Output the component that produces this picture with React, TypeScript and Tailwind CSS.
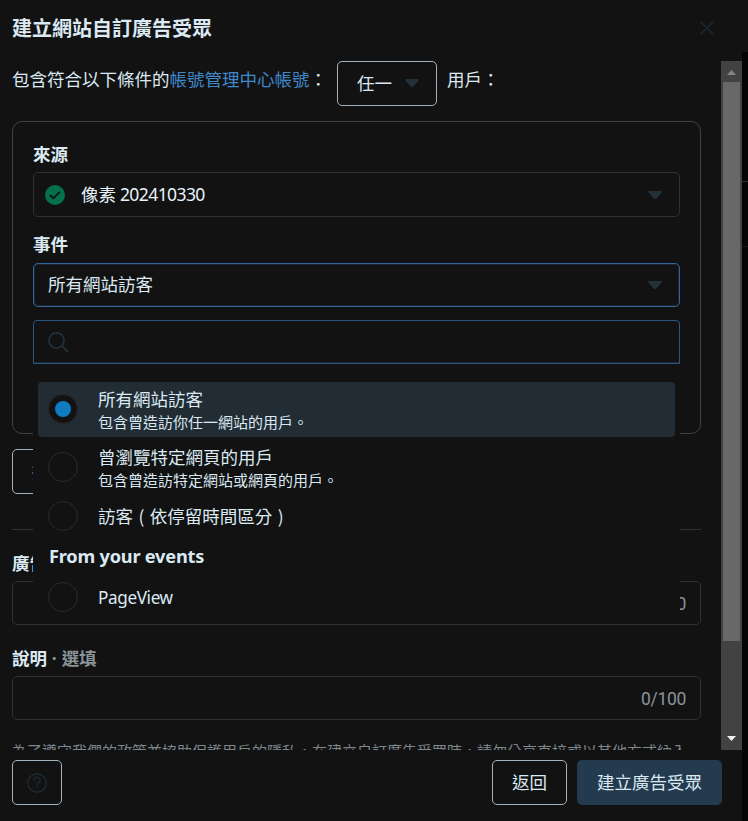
import type { ReactNode } from 'react';
import clsx from 'clsx';

interface EventOption {
  title: string;
  description?: string;
  selected?: boolean;
}

const options: EventOption[] = [
  {
    title: '所有網站訪客',
    description: '包含曾造訪你任一網站的用戶。',
    selected: true,
  },
  {
    title: '曾瀏覽特定網頁的用戶',
    description: '包含曾造訪特定網站或網頁的用戶。',
  },
  { title: '訪客 ( 依停留時間區分 )' },
];

function Caret() {
  return (
    <svg className="h-2 w-3.5 shrink-0" viewBox="0 0 14 8" fill="#22303a">
      <path d="M1.2 0h11.6c1 0 1.4 1.1.7 1.8L8.6 7.2a2.2 2.2 0 0 1-3.2 0L.5 1.8C-.2 1.1.2 0 1.2 0Z" />
    </svg>
  );
}

function Radio({ checked }: { checked?: boolean }) {
  return (
    <span
      className={clsx(
        'flex size-[30px] shrink-0 items-center justify-center rounded-full border bg-[#121212]',
        checked ? 'border-[#272727]' : 'border-[#2c2c2c]',
      )}
    >
      {checked && <span className="size-4 rounded-full bg-[#0f7cc2]" />}
    </span>
  );
}

function SectionLabel({ children }: { children: ReactNode }) {
  return (
    <div className="h-6 text-[17.5px] leading-6 font-bold">{children}</div>
  );
}

function TextInput({ counter }: { counter: string }) {
  return (
    <div className="flex h-11 items-center justify-end rounded-[5px] border border-[#2f3030] pt-[3px] pr-[14px] font-['Roboto',sans-serif] text-[17.5px] tracking-[-0.3px] text-[#8a949b]">
      {counter}
    </div>
  );
}

function EventMenu() {
  return (
    <div className="absolute top-[198px] left-5 h-[303px] w-[647px] bg-[#121212]">
      {/* 搜尋 */}
      <div className="flex h-11 items-center rounded-t-[4px] border border-[#2a5680] pl-3.5 shadow-[inset_0_-1px_0_0_#1b2b3b]">
        <svg
          className="size-[21px]"
          viewBox="0 0 21 21"
          fill="none"
          stroke="#22303a"
          strokeWidth="1.7"
        >
          <circle cx="8.5" cy="8.5" r="7.6" />
          <path d="m14 14 6 6" strokeWidth="2" />
        </svg>
      </div>
      {/* 選項 */}
      <div className="mt-[18px] flex flex-col px-[5px]">
        {options.map((option) => (
          <div
            key={option.title}
            className={clsx(
              'flex items-center gap-5 rounded-[4px] pl-2.5',
              option.selected && 'bg-[#222c34]',
              option.description ? 'h-[55px] pb-px' : 'mt-0.5 h-[37px]',
              option.description && !option.selected && 'mt-[3px]',
            )}
          >
            <Radio checked={option.selected} />
            <div className={clsx(option.description && 'pt-0.5')}>
              <div className="text-[17.5px] leading-6 [word-spacing:1.5px]">
                {option.title}
              </div>
              {option.description && (
                <div className="text-[15px] leading-[22px]">
                  {option.description}
                </div>
              )}
            </div>
          </div>
        ))}
        <div className="mt-2 pl-[11px] font-['Noto_Sans',sans-serif] text-[18.2px] leading-7 font-bold tracking-[-0.22px]">
          From your events
        </div>
        <div className="mt-3 flex items-center gap-5 pl-2.5">
          <Radio />
          <span className="pt-0.5 font-['Noto_Sans',sans-serif] text-[17.2px] tracking-[-0.4px]">
            PageView
          </span>
        </div>
      </div>
    </div>
  );
}

function Scrollbar() {
  return (
    <div className="flex w-[21px] shrink-0 flex-col items-center bg-[#424242]">
      <div className="flex h-[21px] items-center pt-0.5">
        <svg className="h-[5px] w-[9px]" viewBox="0 0 9 5" fill="#858585">
          <path d="M0 5h9L4.5 0Z" />
        </svg>
      </div>
      <div className="h-[559px] w-[17px] bg-[#686868]" />
      <div className="mt-auto flex h-[21px] items-center pb-0.5">
        <svg className="h-[5px] w-[9px]" viewBox="0 0 9 5" fill="#f1f1f1">
          <path d="M0 0h9L4.5 5Z" />
        </svg>
      </div>
    </div>
  );
}

export default function App() {
  return (
    <div className="flex h-[821px] w-[748px] overflow-hidden bg-[#121212] font-['Noto_Sans_CJK_TC',sans-serif] text-[#dbe9f2]">
      <div className="flex w-[742px] shrink-0 flex-col">
        {/* 標題 */}
        <header className="flex h-[61px] shrink-0 items-start justify-between pr-7 pl-3">
          <h1 className="mt-3.5 text-[20px] leading-7 font-bold">
            建立網站自訂廣告受眾
          </h1>
          <svg
            className="mt-[21px] size-3.5"
            viewBox="0 0 14 14"
            stroke="#1d2a32"
            strokeWidth="1.5"
          >
            <path d="m.5.5 13 13M13.500.5l-13 13" />
          </svg>
        </header>

        <div className="flex h-[689px] shrink-0">
          <main className="flex h-full w-[721px] flex-col overflow-hidden pr-5 pl-3">
            <div className="flex h-[45px] shrink-0 text-[17.5px] leading-6">
              <p className="mt-1.5 w-[325px] whitespace-nowrap">
                包含符合以下條件的
                <a className="text-[#3f88cc]">帳號管理中心帳號</a>：
              </p>
              <button className="flex h-[45px] w-[100px] items-center justify-between rounded-[5px] border border-[#a3b2bd] pr-[17px] pb-0.5 pl-[19px]">
                任一
                <Caret />
              </button>
              <p className="mt-1.5 ml-[10px]">用戶：</p>
            </div>

            {/* 條件卡片 */}
            <section className="relative mt-[15px] h-[313px] shrink-0 rounded-[10px] border border-[#414141] px-5 pt-5">
              <SectionLabel>來源</SectionLabel>
              <div className="mt-1.5 flex h-[45px] items-center rounded-[5px] border border-[#2f3030] pr-[17px] pl-[11px]">
                <svg className="size-5" viewBox="0 0 20 20">
                  <circle cx="10" cy="10" r="10" fill="#04714e" />
                  <path
                    d="m5.500 10.500 2.800 2.800 6-6"
                    fill="none"
                    stroke="#121212"
                    strokeWidth="1.900"
                    strokeLinecap="round"
                    strokeLinejoin="round"
                  />
                </svg>
                <span className="ml-4 flex-1 text-[17.5px] text-[#e8f3fb]">
                  像素{' '}
                  <span className="font-['Noto_Sans',sans-serif] tracking-[-0.58px]">
                    202410330
                  </span>
                </span>
                <Caret />
              </div>
              <div className="mt-[15px]">
                <SectionLabel>事件</SectionLabel>
              </div>
              <div className="mt-[7px] flex h-11 items-center rounded-[5px] border border-[#30669b] pr-[17px] pl-3.5 text-[17.5px] shadow-[inset_0_0_0_1px_#1b2531]">
                <span className="flex-1 pb-0.5">所有網站訪客</span>
                <Caret />
              </div>
              <EventMenu />
            </section>

            <button className="mt-[15px] h-[45px] w-[120px] shrink-0 rounded-[5px] border border-[#a3b2bd] pl-[19px] text-left text-[17.5px]">
              排除用戶
            </button>
            <hr className="mt-[35px] shrink-0 border-[#2f3030]" />

            <div className="mt-[21px] shrink-0">
              <SectionLabel>廣告受眾名稱</SectionLabel>
              <div className="mt-1.5">
                <TextInput counter="0/50" />
              </div>
            </div>
            <div className="mt-[21px] shrink-0">
              <SectionLabel>
                說明
                <span className="text-[#8a949b]">
                  <span className="font-['Noto_Sans',sans-serif] tracking-[0.2px]">
                    {' '}
                    ·{' '}
                  </span>
                  選填
                </span>
              </SectionLabel>
              <div className="mt-1.5">
                <TextInput counter="0/100" />
              </div>
            </div>
            <p className="mt-[21px] shrink-0 text-[15px] leading-5 whitespace-nowrap text-[#7d878d]">
              為了遵守我們的政策並協助保護用戶的隱私，在建立自訂廣告受眾時，請勿分享直接或以其他方式納入
            </p>
          </main>
          <Scrollbar />
        </div>

        {/* 頁尾按鈕 */}
        <footer className="flex gap-2.5 pt-2.5 pr-5 pl-3 text-[17.5px]">
          <button className="mr-auto flex h-[45px] w-[50px] items-center justify-center rounded-[5px] border border-[#a3b2bd]">
            <svg
              className="size-5"
              viewBox="0 0 20 20"
              fill="none"
              stroke="#1d2a32"
              strokeWidth="1.400"
            >
              <circle cx="10" cy="10" r="9.200" />
              <path d="M6.800 7.600c0-4.200 6.400-4.200 6.400-.4 0 2.300-3.200 2.400-3.200 5M10 13.600v1.700" />
            </svg>
          </button>
          <button className="h-[45px] w-[75px] rounded-[5px] border border-[#a3b2bd]">
            返回
          </button>
          <button className="h-[45px] w-[145px] rounded-[5px] bg-[#243b4f]">
            建立廣告受眾
          </button>
        </footer>
      </div>

      {/* 視窗後方的頁面邊緣 */}
      <div className="mt-[52px] flex-1 bg-[#050505] pt-[129px]">
        <div className="h-[66px] border-y border-t-[#303030] border-b-[#171717]" />
      </div>
    </div>
  );
}
